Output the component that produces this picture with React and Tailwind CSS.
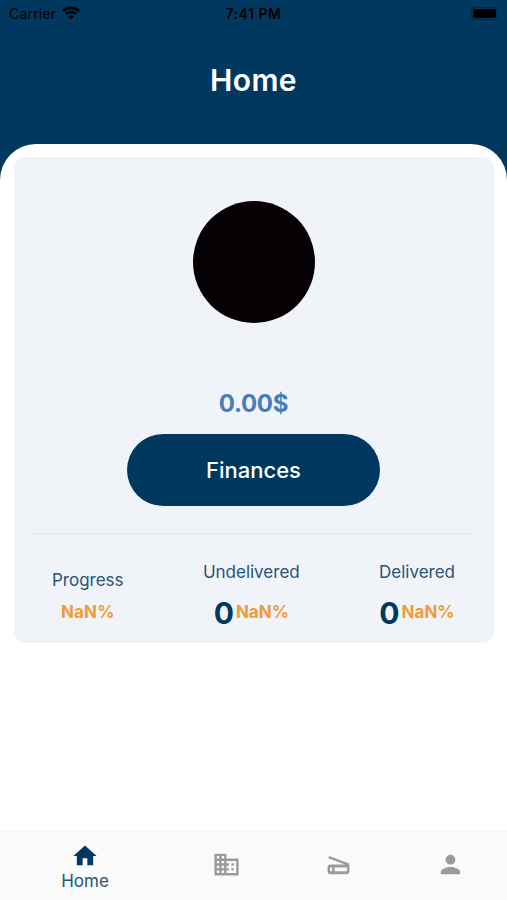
import { MdHome, MdBusiness, MdPerson } from 'react-icons/md';

const stats = [
  { label: 'Undelivered', count: 0, percent: 'NaN%' },
  { label: 'Delivered', count: 0, percent: 'NaN%' },
];

const tabs = [
  { name: 'Offices', Icon: MdBusiness },
  { name: 'Scanner', Icon: ScannerIcon },
  { name: 'Profile', Icon: MdPerson },
];

function ScannerIcon({ size }) {
  return (
    <svg width={size} height={size} viewBox="0 0 24 24" fill="currentColor">
      <path
        fillRule="evenodd"
        d="M19.8 10.7L4.2 5l-.7 1.9L17.6 12H5c-1.1 0-2 .9-2 2v4c0 1.1.9 2 2 2h14c1.1 0 2-.9 2-2v-5.5c0-.8-.5-1.6-1.2-1.8zM5 14.4h1.7v3.2H5v-3.2zM8.8 14.4H19v3.2H8.8v-3.2z"
      />
    </svg>
  );
}

function WifiIcon() {
  return (
    <svg width="18" height="14" viewBox="0 0 18 14" fill="none" stroke="black">
      <path d="M1.1 5.1C5.5 0.7 12.5 0.7 16.9 5.1" strokeWidth="2.7" />
      <path d="M4 8.2C6.8 5.4 11.2 5.4 14 8.2" strokeWidth="2.5" />
      <path d="M9 13.2L6.2 10.4C7.8 9 10.2 9 11.8 10.4Z" fill="black" stroke="none" />
    </svg>
  );
}

function StatusBar() {
  return (
    <div className="grid h-[26px] grid-cols-3 items-center px-[9px] text-[14px] text-black">
      <div className="flex items-center gap-[6px]">
        <span className="tracking-[0.2px]">Carrier</span>
        <WifiIcon />
      </div>
      <span className="text-center font-semibold tracking-[0.55px]">7:41 PM</span>
      <div className="flex justify-end">
        <div className="h-[13px] w-[27px] rounded-[4px] border border-black/30 p-[1px]">
          <div className="h-full w-full rounded-[2px] bg-black" />
        </div>
      </div>
    </div>
  );
}

export default function App() {
  return (
    <div className="flex h-[900px] w-[507px] flex-col overflow-hidden bg-[#01385f] font-['Inter',sans-serif]">
      <StatusBar />
      <h1 className="flex h-[118px] justify-center pt-[32px] text-[30px] leading-[44px] font-semibold tracking-[0.4px] text-white">
        Home
      </h1>

      <main className="flex-1 rounded-t-[36px] bg-white pt-[13px] pr-[13px] pl-[14px]">
        <section className="flex h-[486px] flex-col items-center rounded-xl bg-[#f0f3f8] pt-[44px] pr-[19px] pl-[18px]">
          <div className="h-[122px] w-[122px] shrink-0 rounded-full bg-[#050004]" />
          <p className="mt-[64px] text-[24px] leading-[34px] font-bold tracking-[-0.3px] text-[#457ebd]">
            0.00$
          </p>
          <button className="mt-[13px] h-[72px] w-[253px] shrink-0 rounded-full bg-[#01385f] text-[22px] font-medium text-white">
            Finances
          </button>
          <div className="mt-[27px] h-px w-full shrink-0 bg-[#e0e6f1]" />

          <div className="mt-px flex w-full justify-between px-[20px] text-[17px] text-[#285478]">
            <div className="flex flex-col items-center pt-[33px]">
              <span className="leading-6">Progress</span>
              <span className="mt-[8px] leading-6 font-bold tracking-[0.1px] text-[#f29a38]">NaN%</span>
            </div>
            {stats.map(({ label, count, percent }) => (
              <div key={label} className="flex flex-col items-center pt-[25px]">
                <span className="leading-6">{label}</span>
                <div className="mt-[10px] flex items-center gap-[2px]">
                  <span className="text-[30px] leading-[38px] font-bold text-[#01385f]">{count}</span>
                  <span className="font-bold text-[#f29a38]">{percent}</span>
                </div>
              </div>
            ))}
          </div>
        </section>
      </main>

      <nav className="flex h-[70px] bg-[#fafafa] text-[#9b9b9b]">
        <button className="flex w-[170px] flex-col items-center pt-[12px] text-[#01385f]">
          <MdHome size={28} />
          <span className="text-[17px] leading-[22px] text-[#285478]">Home</span>
        </button>
        {tabs.map(({ name, Icon }) => (
          <button key={name} aria-label={name} className="flex flex-1 items-center justify-center pb-[2px]">
            <Icon size={29} />
          </button>
        ))}
      </nav>
    </div>
  );
}
